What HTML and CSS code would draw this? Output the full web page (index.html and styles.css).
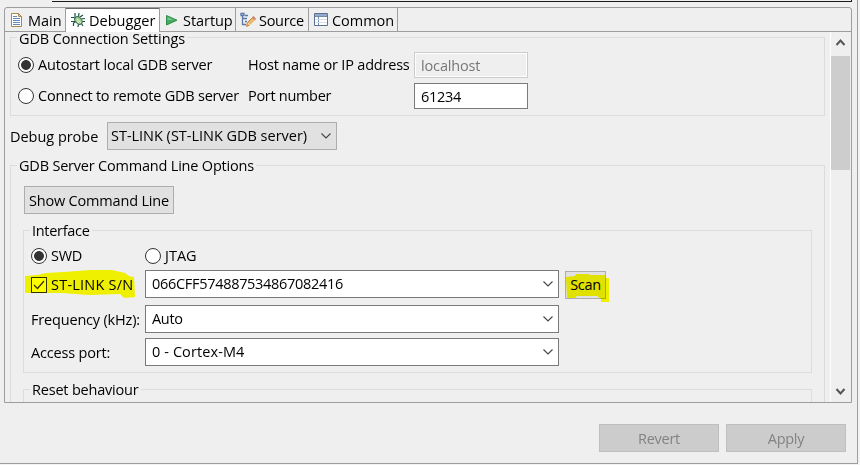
FILE: index.html
```
<!DOCTYPE html>
<html lang="en">
<head>
<meta charset="utf-8">
<title>Debug Configurations</title>
<link rel="stylesheet" href="styles.css">
</head>
<body>
<div class="dialog">
  <div class="upper-field"></div>
  <div class="folder">
    <div class="tabs">
      <div class="tab tab-main">
        <svg class="icon" width="16" height="16" viewBox="0 0 16 16"><path d="M2.500 1.500h7l3 3v10h-10z" fill="#fff" stroke="#a58a45"/><path d="M9.500 1.500v3h3z" fill="#ead28b" stroke="#a58a45"/><path d="M4 4.500h4M4 6.500h7M4 8.500h7M4 10.500h7M4 12.500h7" stroke="#6389bd"/></svg>
        <span class="t-main">Main</span>
      </div>
      <div class="tab tab-debugger active">
        <svg class="icon" width="16" height="16" viewBox="0 0 16 16"><path d="M5 1v4M9 1l-.5 4M1 5.500h3l2 2M1 9.500h4M3.500 14v-3l2-1M8 15l.5-3M13 14l-2-3M11 7l4-.5M10 5l3-2M12 9.500h3" fill="none" stroke="#24504b" stroke-width="1.200"/><ellipse cx="8.500" cy="8.500" rx="3" ry="4.300" transform="rotate(-42 8.500 8.500)" fill="#a9cf94" stroke="#336f55"/><path d="M7 7l4 4M7 9l2 2" stroke="#e7f2c9"/></svg>
        <span class="t-debugger">Debugger</span>
      </div>
      <div class="tab tab-startup">
        <svg class="icon" width="16" height="16" viewBox="0 0 16 16"><path d="M2.500 3.500v9.500L13 8.200z" fill="#48a867" stroke="#2f9147"/><path d="M3.500 5l6 3h-6z" fill="#7cc391"/></svg>
        <span class="t-startup">Startup</span>
      </div>
      <div class="tab tab-source">
        <svg class="icon" width="16" height="16" viewBox="0 0 16 16"><path d="M2.500 3v9.500H6M2.500 6.500H5M1 1.500h3v2H1zM5 3.500h3M5 6.500h2M5 9.500h2" fill="none" stroke="#5b78a9" stroke-width="1.300"/><path d="M6.500 14.500l1-4 6-6 2 2.500-6 6z" fill="#efb466" stroke="#c38643"/><path d="M12 5.500l1.500-1.500 2 2.500-1.500 1.500z" fill="#ca8b82"/><path d="M8 11l1.500 2 5-5" fill="none" stroke="#ffe1a3"/></svg>
        <span class="t-source">Source</span>
      </div>
      <div class="tab tab-common">
        <svg class="icon" width="16" height="16" viewBox="0 0 16 16"><path d="M1.500 1.500h13v12h-13z" fill="#fff" stroke="#5d7191"/><path d="M2 2h12v2H2z" fill="#91a9cc"/><path d="M2 4.500h12M5.500 4v9" stroke="#758baa"/><path d="M2 7.500h12M2 10.500h12" stroke="#d5deeb"/></svg>
        <span class="t-common">Common</span>
      </div>
    </div>
    <div class="page">
      <div class="content">
        <section class="group connection">
          <div class="legend t-connection">GDB Connection Settings</div>
          <div class="connection-grid">
            <label class="option"><i class="radio checked"></i><span class="t-autostart">Autostart local GDB server</span></label>
            <span class="t-host">Host name or IP address</span>
            <div class="input disabled"><span class="t-local">localhost</span></div>
            <label class="option"><i class="radio"></i><span class="t-remote">Connect to remote GDB server</span></label>
            <span class="t-port">Port number</span>
            <div class="input"><span class="t-number">61234</span></div>
          </div>
        </section>
        <div class="probe-row">
          <span class="t-probe">Debug probe</span>
          <div class="probe-select"><span class="t-stlink">ST-LINK (ST-LINK GDB server)</span><svg class="chevron" width="10" height="6" viewBox="0 0 10 6"><path d="M.5 .5L5 5 9.500 .5"/></svg></div>
        </div>
        <section class="group server">
          <div class="legend t-server">GDB Server Command Line Options</div>
          <div class="button show"><span class="t-show">Show Command Line</span></div>
          <section class="group interface">
            <div class="legend t-interface">Interface</div>
            <div class="mode-row">
              <label class="option"><i class="radio checked"></i><span class="t-swd">SWD</span></label>
              <label class="option"><i class="radio"></i><span class="t-jtag">JTAG</span></label>
            </div>
            <div class="field-row serial">
              <label class="option"><i class="checkbox"><svg width="12" height="10" viewBox="0 0 12 10"><path d="M1 5l3.500 3.500L11 1"/></svg></i><span class="t-sn">ST-LINK S/N</span>
                <svg class="mark mark-serial" width="112" height="32" viewBox="0 0 112 32"><path d="M0 6l12-1 9-2 18-1L65 0h22l13 3 4 3 5 1 1 20-11 1-4-4-31 1-27-2H0z" fill="#ff0"/></svg>
              </label>
              <div class="combo"><span class="t-serial">066CFF574887534867082416</span><svg class="chevron" width="10" height="6" viewBox="0 0 10 6"><path d="M.5 .5L5 5 9.500 .5"/></svg></div>
              <div class="button scan"><span class="t-scan">Scan</span>
                <svg class="mark mark-scan" width="44" height="28" viewBox="0 0 44 28"><path d="M0 3l9-1 1-2h13l1 1h15v3h4v24h-8v-3l-4-3H11l-2 2H1z" fill="#ff0"/></svg>
              </div>
            </div>
            <div class="field-row frequency">
              <span class="t-frequency">Frequency (kHz):</span>
              <div class="combo"><span class="t-auto">Auto</span><svg class="chevron" width="10" height="6" viewBox="0 0 10 6"><path d="M.5 .5L5 5 9.500 .5"/></svg></div>
            </div>
            <div class="field-row access">
              <span class="t-access">Access port:</span>
              <div class="combo"><span class="t-cortex">0 - Cortex-M4</span><svg class="chevron" width="10" height="6" viewBox="0 0 10 6"><path d="M.5 .5L5 5 9.500 .5"/></svg></div>
            </div>
          </section>
          <section class="group reset">
            <div class="legend t-reset">Reset behaviour</div>
          </section>
        </section>
      </div>
      <div class="scrollbar">
        <svg class="arrow" width="19" height="24" viewBox="0 0 19 24"><path d="M5.500 13L9.500 8.500 13.500 13"/></svg>
        <div class="thumb"></div>
        <svg class="arrow down" width="19" height="24" viewBox="0 0 19 24"><path d="M5.500 11L9.500 15.500 13.500 11"/></svg>
      </div>
    </div>
  </div>
  <div class="actions">
    <div class="button inactive"><span class="t-revert">Revert</span></div>
    <div class="button inactive"><span class="t-apply">Apply</span></div>
  </div>
</div>
</body>
</html>
```

FILE: styles.css
```
* { box-sizing: border-box; }
body { margin: 0; width: 860px; height: 465px; overflow: hidden; background: #f3f3f3; color: #000; font: 14.5px/20px "Open Sans", "Noto Sans", sans-serif; letter-spacing: -0.3px; white-space: nowrap; }
span { flex: none; }
svg { display: block; flex: none; }
.dialog { width: 858px; height: 464px; background: #efefef; border: solid #9d9d9d; border-width: 0 1px 1px 0; }
.upper-field { width: 800px; height: 2px; margin-left: 52px; border: solid #1b1b1b; border-width: 0 1px 1px 0; }
.folder { width: 848px; height: 396px; margin: 5px 0 0 4px; border: 1px solid #9d9d9d; border-radius: 3px 3px 0 0; }
.tabs { display: flex; height: 24px; border-bottom: 1px solid #9d9d9d; line-height: 18px; }
.tab { display: flex; align-items: center; height: 23px; padding-left: 4px; border-right: 1px solid #9d9d9d; padding-top: 2px; }
.tab .icon { margin: -2px 3px 0 0; }
.tab-main { width: 61px; }
.tab-debugger { width: 94px; }
.tab-startup { width: 76px; }
.tab-source { width: 73px; }
.tab-common { width: 89px; }
.tab.active { height: 24px; background: #fff; box-shadow: inset 0 1px #686868; }
.page { display: flex; height: 370px; }
.content { width: 825px; height: 370px; padding: 5px 0 0 5px; overflow: hidden; }
.group { border: 1px solid #dcdcdc; }
.legend { width: fit-content; margin: -10px 0 0 6px; padding: 0 2px; background: #efefef; }
.connection { width: 815px; height: 79px; }
.connection .legend { height: 15px; margin-top: -5px; line-height: 11px; }
.connection-grid { display: grid; grid-template-columns: 230px 166px 114px; grid-template-rows: 26px 26px; row-gap: 5px; align-items: center; margin: 4px 0 0 7px; }
.option { display: flex; align-items: center; }
.radio { flex: none; width: 16px; height: 16px; margin-right: 4px; border: 1px solid #333; border-radius: 50%; background: #fff; }
.radio.checked { background: radial-gradient(circle, #333 0 4.500px, #fff 5.300px); }
.input { height: 26px; padding: 3px 6px; border: 1px solid #7a7a7a; background: #fff; }
.input.disabled { border-color: #ccc; background: #efefef; color: #777; box-shadow: inset 0 0 0 1px #fff; }
.probe-row { display: flex; align-items: center; height: 28px; margin-top: 6px; }
.probe-select { display: flex; align-items: center; justify-content: space-between; width: 230px; height: 28px; padding: 0 5px 0 3px; border: 1px solid #adadad; background: #e1e1e1; }
.chevron path { fill: none; stroke: #444; stroke-width: 1.100; }
.server { width: 815px; height: 280px; margin-top: 15px; }
.button { display: flex; align-items: center; justify-content: center; height: 28px; border: 1px solid #adadad; background: #e1e1e1; }
.show { width: 150px; margin: 10px 0 0 13px; }
.interface { width: 789px; height: 143px; margin: 16px 0 0 12px; }
.mode-row { display: grid; grid-template-columns: 114px 100px; height: 20px; margin: 5px 0 0 7px; }
.field-row { display: grid; grid-template-columns: 114px 414px 41px; align-items: center; height: 28px; margin-left: 7px; }
.serial { margin-top: 4px; height: 29px; align-items: start; }
.serial .option { position: relative; height: 30px; }
.serial .button { position: relative; margin: 1px 0 0 6px; width: 41px; }
.frequency { margin-top: 6px; }
.access { margin-top: 5px; }
.checkbox { display: grid; place-items: center; width: 16px; height: 16px; margin-right: 4px; border: 1px solid #333; background: #fff; }
.checkbox path { fill: none; stroke: #333; stroke-width: 1.300; }
.combo { display: flex; align-items: center; justify-content: space-between; height: 28px; padding: 0 5px 0 6px; border: 1px solid #7a7a7a; background: #fff; }
.mark { position: absolute; mix-blend-mode: multiply; pointer-events: none; }
.mark-serial { left: -6px; top: 0; }
.mark-scan { left: 0; top: 2px; }
.reset { width: 789px; height: 60px; margin: 16px 0 0 12px; }
.scrollbar { width: 21px; height: 370px; border-left: 1px solid #fff; }
.arrow path { fill: none; stroke: #555; stroke-width: 2; }
.thumb { width: 19px; height: 114px; background: #cdcdcd; }
.down { margin-top: 208px; }
.actions { display: flex; gap: 7px; margin: 21px 0 0 599px; }
.inactive { width: 120px; background: #ccc; border-color: #bfbfbf; color: #838383; }
.t-probe, .t-show, .t-revert, .t-apply, .t-access, .t-frequency { padding-top: 1px; }
.t-main, .t-jtag { letter-spacing: 0; }
.t-debugger { letter-spacing: 0.03px; }
.t-startup, .t-common { letter-spacing: -0.05px; }
.t-connection { letter-spacing: -0.13px; }
.t-autostart { letter-spacing: -0.15px; }
.t-host, .t-server, .t-reset { letter-spacing: -0.2px; }
.t-remote { letter-spacing: -0.22px; }
.t-local { letter-spacing: -0.15px; }
.t-probe { width: 97px; letter-spacing: -0.03px; }
.t-stlink { letter-spacing: -0.02px; }
.t-show { letter-spacing: -0.18px; }
.t-sn { letter-spacing: 0.22px; }
.t-access, .t-frequency { letter-spacing: -0.18px; }
.t-cortex { letter-spacing: 0.1px; }
```
